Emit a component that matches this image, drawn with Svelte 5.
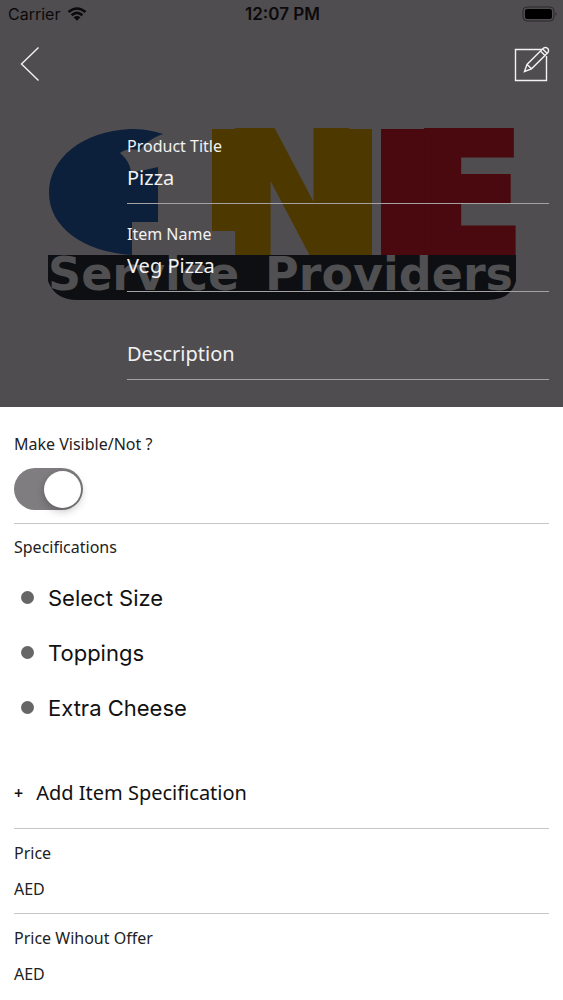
<script lang="ts">
	let title = $state('Pizza');
	let itemName = $state('Veg Pizza');
	let description = $state('');
	let visible = $state(true);
	let price = $state('AED');
	let fullPrice = $state('AED');

	const specifications = ['Select Size', 'Toppings', 'Extra Cheese'];
</script>

<main class="screen">
	<header class="hero">
		<svg class="cover" viewBox="0 0 563 407" preserveAspectRatio="xMidYMid slice" aria-hidden="true">
			<path
				fill="#0c203c"
				d="M163 134 C151 130 141 129 130 129 C83 131 49 158 49 193 C49 226 82 252 132 255 L132 222 L158 222 L158 167 C149 169 141 171 131 172 C130 164 126 158 120 153 C126 148 134 149 140 150 C145 143 154 137 163 134 Z"
			/>
			<g fill="#4d3900" stroke="#4d3900">
				<rect x="212" y="129" width="36" height="102" stroke="none" />
				<rect x="335" y="129" width="37" height="126" stroke="none" />
				<text class="mark" x="223" y="252">N</text>
			</g>
			<g fill="#4a090e" stroke="#4a090e">
				<rect x="381" y="129" width="48" height="126" stroke="none" />
				<text class="mark" x="412" y="252">E</text>
			</g>
			<path fill="#0d0f13" d="M48 255 H516 V281 Q511 300 487 300 H77 Q55 300 48 281 Z" />
			<text class="tagline" x="48" y="290">Service</text>
			<text class="tagline" x="513" y="290" text-anchor="end">Providers</text>
		</svg>

		<div class="status">
			<span class="carrier">
				Carrier
				<svg width="20" height="14" viewBox="0 0 20 14" aria-hidden="true">
					<path
						d="M1.5 5 Q10 -2 18.5 5 M4.6 8.3 Q10 3.6 15.4 8.3"
						fill="none"
						stroke="#0b0a0b"
						stroke-width="2.6"
					/>
					<path d="M6.6 10.3 Q10 7.6 13.4 10.3 L10 13.7 Z" fill="#0b0a0b" />
				</svg>
			</span>
			<span class="clock">12:07 PM</span>
			<svg class="battery" width="36" height="16" viewBox="0 0 36 16" aria-hidden="true">
				<rect x="2" y="1" width="31" height="14" rx="4" fill="none" stroke="#2b292b" />
				<rect x="4" y="3" width="27" height="10" rx="2" fill="#000" />
				<path d="M34.5 6 Q36.5 8 34.5 10 Z" fill="#2b292b" />
			</svg>
		</div>

		<nav class="toolbar">
			<button type="button" aria-label="Back">
				<svg width="20" height="36" viewBox="0 0 20 36">
					<path d="M18.5 1.5 L1.5 18 L18.5 34.5" />
				</svg>
			</button>
			<button type="button" aria-label="Edit">
				<svg width="36" height="36" viewBox="0 0 36 36">
					<path d="M28 3.5 H1.5 V34.5 H32.5 V10" />
					<path
						d="M10.5 25.5 L13 18.5 L29 2.5 Q31.5 0.5 33.7 2.5 Q35.5 4.8 33.5 7 L17.5 22.8 Z M13 18.5 L17.5 22.8 M26.5 5 L31 9.5 M28.6 2.9 L33 7.3"
					/>
				</svg>
			</button>
		</nav>

		<div class="hero-fields">
			<div class="hero-field">
				<label for="title">Product Title</label>
				<input id="title" type="text" bind:value={title} />
			</div>
			<div class="hero-field">
				<label for="item-name">Item Name</label>
				<input id="item-name" type="text" bind:value={itemName} />
			</div>
			<div class="hero-field">
				<input type="text" placeholder="Description" aria-label="Description" bind:value={description} />
			</div>
		</div>
	</header>

	<div class="details">
		<section class="visibility">
			<label for="visible">Make Visible/Not ?</label>
			<input id="visible" class="switch" type="checkbox" role="switch" bind:checked={visible} />
		</section>

		<section class="specs">
			<h2>Specifications</h2>
			<ul>
				{#each specifications as spec}
					<li>{spec}</li>
				{/each}
			</ul>
			<button class="add" type="button">
				<span class="plus">+</span>
				Add Item Specification
			</button>
		</section>

		<section class="price">
			<label for="price">Price</label>
			<input id="price" type="text" bind:value={price} />
		</section>

		<section class="price">
			<label for="full-price">Price Wihout Offer</label>
			<input id="full-price" type="text" bind:value={fullPrice} />
		</section>
	</div>
</main>

<style>
	:global(body) {
		background: #fff;
	}

	.screen {
		font-family: 'Noto Sans', 'Open Sans', sans-serif;
		font-size: 16px;
		line-height: 20px;
		color: #222;
	}

	button,
	input {
		margin: 0;
		padding: 0;
		border: 0;
		background: none;
		color: inherit;
		font: inherit;
	}

	button {
		cursor: pointer;
	}

	h2 {
		margin: 0;
		font-size: 16px;
		font-weight: 400;
	}

	.hero {
		position: relative;
		padding-bottom: 27px;
		background: #504d50;
		color: #f2f2f2;
	}

	.cover {
		position: absolute;
		inset: 0;
		width: 100%;
		height: 100%;
	}

	.mark {
		font: 700 165px 'DejaVu Sans', sans-serif;
		stroke-width: 6px;
	}

	.tagline {
		font: 700 46px 'DejaVu Sans', sans-serif;
		fill: #504f51;
	}

	.status,
	.toolbar,
	.hero-fields {
		position: relative;
	}

	.status {
		display: grid;
		grid-template-columns: 1fr auto 1fr;
		align-items: center;
		height: 28px;
		padding: 0 6px 0 8px;
		color: #0b0a0b;
		font-family: Inter, 'Liberation Sans', sans-serif;
	}

	.carrier {
		display: flex;
		align-items: center;
		gap: 7px;
	}

	.clock {
		font-size: 17px;
		font-weight: 600;
	}

	.battery {
		justify-self: end;
	}

	.toolbar {
		display: flex;
		justify-content: space-between;
		padding: 18px 13px 34px 20px;
	}

	.toolbar svg {
		display: block;
		fill: none;
		stroke: #f2f2f2;
		stroke-width: 1.4;
	}

	.hero-fields {
		padding: 0 14px 0 127px;
	}

	.hero-field {
		display: flex;
		flex-direction: column;
		justify-content: flex-end;
		gap: 5px;
		box-sizing: border-box;
		height: 88px;
		padding-bottom: 10px;
		border-bottom: 1px solid #a3a1a3;
	}

	.hero-field input {
		width: 100%;
		height: 32px;
		font-size: 20px;
	}

	.hero-field input::placeholder {
		color: #f2f2f2;
		opacity: 1;
	}

	.details {
		padding: 0 14px;
	}

	section {
		display: flex;
		flex-direction: column;
		align-items: flex-start;
		border-bottom: 1px solid #c6c6c6;
	}

	section:last-child {
		border-bottom: 0;
	}

	.visibility {
		gap: 14px;
		padding: 27px 0 13px;
	}

	.switch {
		appearance: none;
		display: flex;
		align-items: center;
		box-sizing: border-box;
		width: 69px;
		height: 42px;
		padding: 0 2px;
		border-radius: 21px;
		background: #d8d8d8;
		cursor: pointer;
	}

	.switch::before {
		content: '';
		width: 37px;
		height: 37px;
		border-radius: 50%;
		background: #fff;
		box-shadow: 0 3px 8px rgba(0, 0, 0, 0.25);
	}

	.switch:checked {
		justify-content: flex-end;
		background: #807d80;
	}

	.specs {
		padding: 13px 0 19px;
	}

	ul {
		margin: 13px 0 42px;
		padding: 0;
		list-style: none;
	}

	li {
		display: flex;
		align-items: center;
		gap: 14px;
		height: 55px;
		padding-left: 7px;
		color: #111;
		font-family: Inter, 'Liberation Sans', sans-serif;
		font-size: 22px;
	}

	li::before {
		content: '';
		width: 13px;
		height: 13px;
		border-radius: 50%;
		background: #666;
	}

	.add {
		display: flex;
		align-items: center;
		gap: 13px;
		height: 32px;
		color: #111;
		font-size: 20px;
	}

	.plus {
		font-size: 16px;
		font-weight: 600;
	}

	.price {
		gap: 10px;
		padding: 14px 0 8px;
	}

	.price input {
		width: 100%;
		height: 32px;
	}
</style>
